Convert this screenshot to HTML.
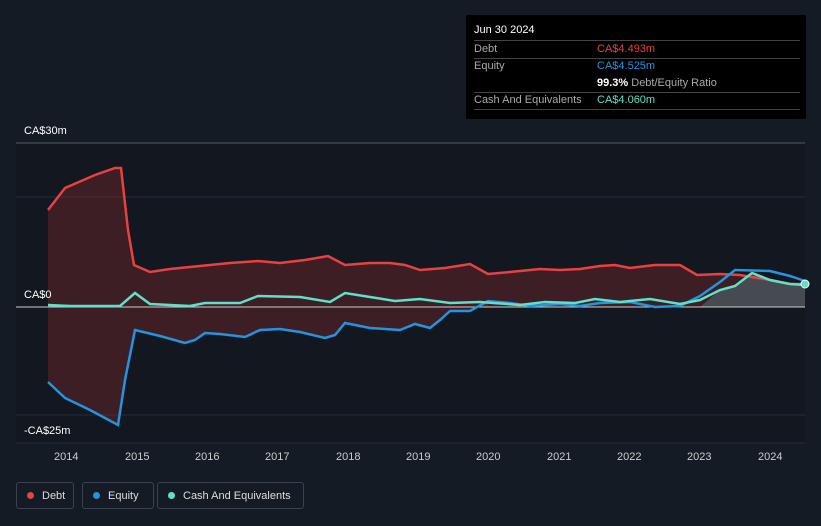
<!DOCTYPE html>
<html><head><meta charset="utf-8"><style>
body{margin:0;width:821px;height:526px;background:#151b25;font-family:"Liberation Sans",sans-serif;overflow:hidden;position:relative}
.t{position:absolute;color:#fff;font-size:11px}
.tip{position:absolute;left:466px;top:15px;width:340px;height:104px;background:#000;border-radius:2px}
.row{position:absolute;left:8px;width:326px;font-size:11px;color:#aaa;border-bottom:1px solid #444;height:17px;line-height:17px}
.row span{position:absolute;left:123px}
.leg{position:absolute;top:482px;height:27px;border:1px solid #3a4250;border-radius:3px;color:#ddd;font-size:11px;line-height:27px;box-sizing:border-box}
.dot{display:inline-block;width:7px;height:7px;border-radius:50%;margin:0 8px 0 10px}
</style></head><body>
<svg width="821" height="526" style="position:absolute;left:0;top:0">
<rect x="16" y="143" width="789" height="300" fill="#131820"/>
<line x1="16" y1="143" x2="805" y2="143" stroke="#555b64"/>
<line x1="16" y1="197" x2="805" y2="197" stroke="#262c36"/>
<line x1="16" y1="415" x2="805" y2="415" stroke="#262c36"/>
<line x1="16" y1="443" x2="805" y2="443" stroke="#262c36"/>
<path d="M48,210 L65,188 95,175 115,168 121,168 128,230 134,265 150,272 170,269 200,266 230,263 258,261 280,263 305,260 328,256 345,265 370,263 390,263 405,265 420,270 445,268 470,264 488,274 510,272 540,269 560,270 580,269 600,266 615,265 630,268 655,265 680,265 697,275 720,274 740,275 770,280 790,284 805,284 L805,307 48,307Z" fill="rgba(160,45,45,0.3)"/>
<path d="M48,382 L65,398 90,410 118,425 125,380 135,330 160,336 185,343 195,340 205,333 220,334 245,337 260,330 280,329 300,332 325,338 335,335 345,323 370,328 400,330 415,324 430,328 440,320 450,311 470,311 488,301 L488,307 48,307Z" fill="rgba(160,45,45,0.3)"/>
<path d="M700,307 L720,290 735,286 752,273 770,280 790,284 805,285 L805,307Z" fill="rgba(90,160,170,0.35)"/>
<line x1="16" y1="307" x2="805" y2="307" stroke="#ccc"/>
<polyline fill="none" stroke="#e84142" stroke-width="2.5" points="48,210 65,188 95,175 115,168 121,168 128,230 134,265 150,272 170,269 200,266 230,263 258,261 280,263 305,260 328,256 345,265 370,263 390,263 405,265 420,270 445,268 470,264 488,274 510,272 540,269 560,270 580,269 600,266 615,265 630,268 655,265 680,265 697,275 720,274 740,275 770,280 790,284 805,284"/>
<polyline fill="none" stroke="#2394df" stroke-width="2.5" points="48,382 65,398 90,410 118,425 125,380 135,330 160,336 185,343 195,340 205,333 220,334 245,337 260,330 280,329 300,332 325,338 335,335 345,323 370,328 400,330 415,324 430,328 440,320 450,311 470,311 488,301 510,303 530,306 560,304 580,306 600,303 630,302 655,307 680,306 700,296 720,282 735,270 770,271 790,276 805,281"/>
<polyline fill="none" stroke="#5fe0c8" stroke-width="2.5" points="48,305 70,306 120,306 135,293 150,304 190,306 205,303 240,303 258,296 300,297 330,302 345,293 370,297 395,301 420,299 450,303 480,302 520,305 545,302 575,303 595,299 620,302 650,299 680,304 700,300 720,290 735,286 752,273 770,280 790,284 805,285"/>
<circle cx="805" cy="284" r="4" fill="#5fe0c8" stroke="#fff" stroke-width="1"/>
</svg>
<div class="t" style="left:24px;top:125px">CA$30m</div>
<div class="t" style="left:24px;top:289px">CA$0</div>
<div class="t" style="left:24px;top:425px">-CA$25m</div>
<div class="t" style="left:54px;top:451px;color:#ccc">2014</div>
<div class="t" style="left:125px;top:451px;color:#ccc">2015</div>
<div class="t" style="left:195px;top:451px;color:#ccc">2016</div>
<div class="t" style="left:265px;top:451px;color:#ccc">2017</div>
<div class="t" style="left:336px;top:451px;color:#ccc">2018</div>
<div class="t" style="left:406px;top:451px;color:#ccc">2019</div>
<div class="t" style="left:476px;top:451px;color:#ccc">2020</div>
<div class="t" style="left:547px;top:451px;color:#ccc">2021</div>
<div class="t" style="left:617px;top:451px;color:#ccc">2022</div>
<div class="t" style="left:687px;top:451px;color:#ccc">2023</div>
<div class="t" style="left:758px;top:451px;color:#ccc">2024</div>
<div class="tip">
<div style="position:absolute;left:8px;top:9px;color:#fff;font-size:11px">Jun 30 2024</div>
<div class="row" style="top:25px;border-top:1px solid #444">Debt<span style="color:#e84142">CA$4.493m</span></div>
<div class="row" style="top:43px;border-bottom:none">Equity<span style="color:#2394df">CA$4.525m</span></div>
<div class="row" style="top:60px"><span style="color:#fff;font-weight:bold">99.3% <b style="color:#aaa;font-weight:normal">Debt/Equity Ratio</b></span></div>
<div class="row" style="top:77px">Cash And Equivalents<span style="color:#5fe0c8">CA$4.060m</span></div>
</div>
<div class="leg" style="left:16px;width:58px"><span class="dot" style="background:#e84142"></span>Debt</div>
<div class="leg" style="left:82px;width:72px"><span class="dot" style="background:#2394df"></span>Equity</div>
<div class="leg" style="left:157px;width:147px"><span class="dot" style="background:#5fe0c8"></span>Cash And Equivalents</div>
</body></html>
